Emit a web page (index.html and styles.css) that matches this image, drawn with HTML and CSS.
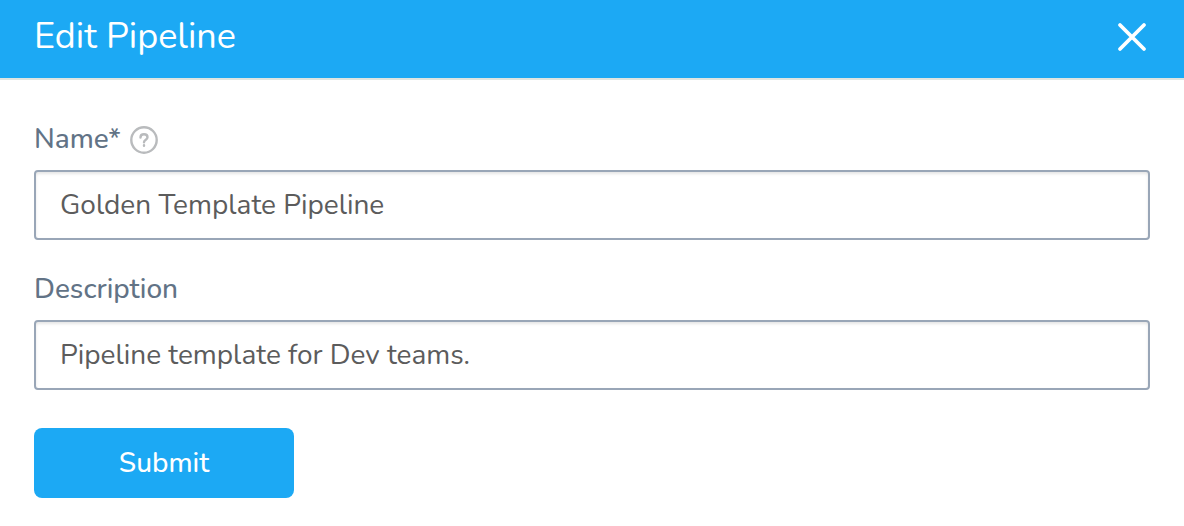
FILE: index.html
```html
<!DOCTYPE html>
<html lang="en">
<head>
<meta charset="utf-8">
<meta name="viewport" content="width=device-width, initial-scale=1">
<title>Edit Pipeline</title>
<link rel="stylesheet" href="styles.css">
</head>
<body>
<main class="dialog">
  <header class="dialog-header">
    <h1 class="dialog-title">Edit Pipeline</h1>
    <button class="close-button" type="button" aria-label="Close">
      <svg class="close-icon" viewBox="0 0 28 28" aria-hidden="true"><path d="M2 2 26 26M26 2 2 26"/></svg>
    </button>
  </header>
  <form class="dialog-form">
    <div class="field">
      <div class="label-row">
        <label class="label" for="name">Name*</label>
        <button class="help-button" type="button" aria-label="Help">
          <svg class="help-icon" viewBox="0 0 28 28" aria-hidden="true"><circle cx="14" cy="15" r="12.700"/><path d="M10.500 12.500C10.500 10.300 12 9.300 14 9.300s3.500 1.200 3.500 3c0 2.400-3.500 2.400-3.500 5M14 20.300v.5"/></svg>
        </button>
      </div>
      <input class="text-input" id="name" type="text" value="Golden Template Pipeline">
    </div>
    <div class="field">
      <div class="label-row">
        <label class="label" for="description">Description</label>
      </div>
      <input class="text-input" id="description" type="text" value="Pipeline template for Dev teams.">
    </div>
    <button class="submit-button" type="submit">Submit</button>
  </form>
</main>
</body>
</html>
```
FILE: styles.css
```css
* {
  box-sizing: border-box;
}

body {
  margin: 0;
  background: #fff;
  font-family: Nunito, Lato, sans-serif;
  font-size: 28px;
}

.dialog-header {
  display: flex;
  align-items: center;
  justify-content: space-between;
  padding: 13px 34px 17px;
  background: #1ca9f4;
  border-bottom: 2px solid #dfe5e1;
}

.dialog-title {
  margin: 0;
  color: #fff;
  font-size: 36px;
  font-weight: 400;
  line-height: 48px;
}

.close-button,
.help-button {
  display: flex;
  padding: 0;
  border: 0;
  background: none;
  cursor: pointer;
}

.close-button {
  padding: 4px;
}

.close-icon,
.help-icon {
  width: 28px;
  height: 28px;
  fill: none;
  stroke-linecap: round;
  overflow: visible;
}

.close-icon {
  stroke: #fff;
  stroke-width: 3.8;
}

.help-icon {
  stroke: #b9bbbd;
  stroke-width: 2.4;
}

.dialog-form {
  padding: 40px 34px 28px;
}

.field {
  margin-bottom: 30px;
}

.label-row {
  display: flex;
  align-items: center;
  gap: 9px;
  margin-bottom: 12px;
}

.label {
  color: #627386;
  font-weight: 500;
  line-height: 38px;
}

.text-input {
  display: block;
  width: 100%;
  height: 70px;
  padding: 0 24px;
  border: 2px solid #99a6b7;
  border-radius: 4px;
  background: #fff;
  box-shadow: inset 0 2px 3px rgba(0, 0, 0, 0.1);
  color: #5c5c5c;
  font: inherit;
  font-weight: 400;
}

.submit-button {
  display: block;
  min-width: 260px;
  height: 70px;
  margin-top: 38px;
  border: 0;
  border-radius: 8px;
  background: #1ca9f4;
  color: #fff;
  font: inherit;
  font-weight: 500;
  cursor: pointer;
}
```
